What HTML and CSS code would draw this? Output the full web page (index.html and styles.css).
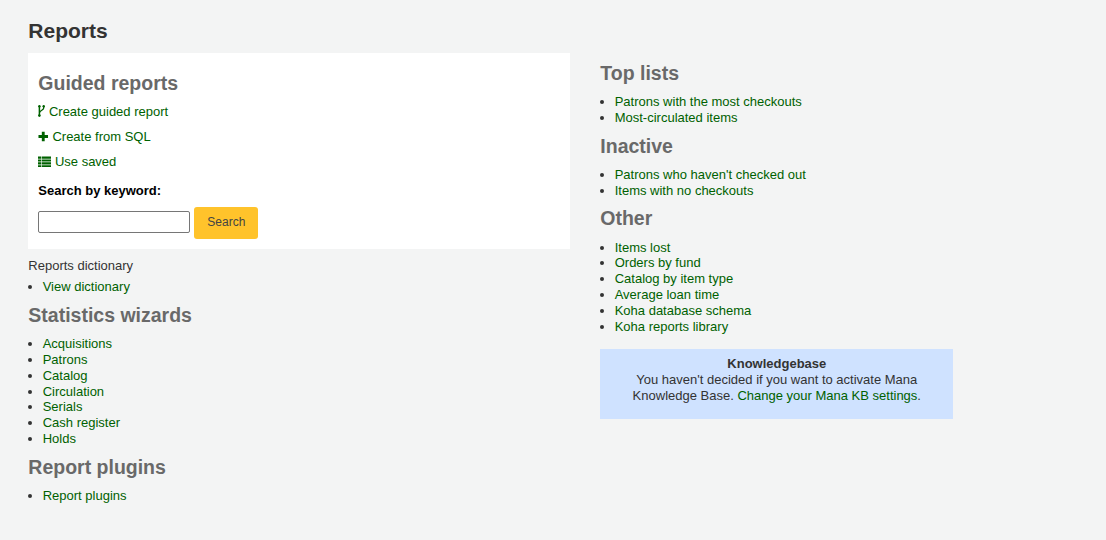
FILE: index.html
```html
<!DOCTYPE html>
<html lang="en">
<head>
<meta charset="utf-8">
<title>Reports</title>
<link rel="stylesheet" href="styles.css">
</head>
<body>
<main class="main">
  <h1 class="title">Reports</h1>
  <div class="columns">
    <div class="col">
      <section class="panel">
        <h2 class="panel-heading">Guided reports</h2>
        <p class="action"><a href="#"><svg class="icon branch" viewBox="0 0 7 12"><path d="M1.4 1V11" fill="none" stroke="currentColor" stroke-width="1.5"/><path d="M5.7 1V3C5.7 5 2.4 5.2 1.5 7.4" fill="none" stroke="currentColor" stroke-width="1.3"/><circle cx="1.4" cy="1.3" r="1.2" fill="currentColor"/><circle cx="5.7" cy="1.3" r="1.2" fill="currentColor"/><circle cx="1.4" cy="10.6" r="1.3" fill="currentColor"/></svg> Create guided report</a></p>
        <p class="action"><a href="#"><svg class="icon plus" viewBox="0 0 11 11"><path d="M4 0.5H7V4H10.5V7H7V10.5H4V7H0.5V4H4Z" fill="currentColor"/></svg> Create from SQL</a></p>
        <p class="action"><a href="#"><svg class="icon list" viewBox="0 0 13 11"><path d="M0 0.5H3V2.7H0ZM3.6 0.5H13V2.7H3.6ZM0 3.4H3V5.6H0ZM3.6 3.4H13V5.6H3.6ZM0 6.3H3V8.5H0ZM3.6 6.3H13V8.5H3.6ZM0 9.2H3V11H0ZM3.6 9.2H13V11H3.6Z" fill="currentColor"/></svg> Use saved</a></p>
        <form class="search">
          <label class="search-label" for="kw">Search by keyword:</label>
          <div class="search-row">
            <input class="search-input" id="kw" type="text">
            <button class="search-btn" type="button">Search</button>
          </div>
        </form>
      </section>
      <p class="dict-label">Reports dictionary</p>
      <ul class="links">
        <li><a href="#">View dictionary</a></li>
      </ul>
      <h2 class="heading">Statistics wizards</h2>
      <ul class="links">
        <li><a href="#">Acquisitions</a></li>
        <li><a href="#">Patrons</a></li>
        <li><a href="#">Catalog</a></li>
        <li><a href="#">Circulation</a></li>
        <li><a href="#">Serials</a></li>
        <li><a href="#">Cash register</a></li>
        <li><a href="#">Holds</a></li>
      </ul>
      <h2 class="heading">Report plugins</h2>
      <ul class="links">
        <li><a href="#">Report plugins</a></li>
      </ul>
    </div>
    <div class="col col-right">
      <h2 class="heading">Top lists</h2>
      <ul class="links">
        <li><a href="#">Patrons with the most checkouts</a></li>
        <li><a href="#">Most-circulated items</a></li>
      </ul>
      <h2 class="heading">Inactive</h2>
      <ul class="links">
        <li><a href="#">Patrons who haven't checked out</a></li>
        <li><a href="#">Items with no checkouts</a></li>
      </ul>
      <h2 class="heading">Other</h2>
      <ul class="links">
        <li><a href="#">Items lost</a></li>
        <li><a href="#">Orders by fund</a></li>
        <li><a href="#">Catalog by item type</a></li>
        <li><a href="#">Average loan time</a></li>
        <li><a href="#">Koha database schema</a></li>
        <li><a href="#">Koha reports library</a></li>
      </ul>
      <div class="kb">
        <strong>Knowledgebase</strong><br>
        You haven't decided if you want to activate Mana Knowledge Base. <a href="#">Change your Mana KB settings</a>.
      </div>
    </div>
  </div>
</main>
</body>
</html>
```
FILE: styles.css
```css
html, body {
  margin: 0;
  padding: 0;
}

body {
  background: #f3f4f4;
  color: #333;
  font-family: "Liberation Sans", Arial, sans-serif;
  font-size: 13px;
  line-height: 15.84px;
  height: 540px;
  overflow: hidden;
}

a {
  color: #006100;
  text-decoration: none;
}

.main {
  padding: 19px 28px 0 28.3px;
}

.title {
  margin: 0 0 10px;
  font-size: 21px;
  line-height: 24px;
  font-weight: bold;
  color: #333;
}

.columns {
  display: flex;
  gap: 30px;
}

.col {
  width: 542px;
  flex: none;
}

.col-right {
  width: 353px;
  padding-top: 9.15px;
}

.panel {
  background: #fff;
  padding: 19px 10px 10px;
  margin-bottom: 9.8px;
}

.panel-heading,
.heading {
  margin: 0;
  font-size: 19.5px;
  line-height: 23.4px;
  font-weight: bold;
  color: #696969;
}

.panel-heading {
  margin-bottom: 9px;
}

.heading {
  margin-bottom: 8.9px;
}

.action {
  margin: 0 0 9.16px;
}

.icon {
  display: inline-block;
  vertical-align: -1px;
}

.branch {
  width: 7px;
  height: 12px;
}

.plus {
  width: 10.5px;
  height: 11px;
}

.list {
  width: 13px;
  height: 11px;
}

.search {
  margin-top: 12.6px;
}

.search-label {
  display: block;
  font-weight: bold;
  color: #000;
  margin-bottom: 8px;
}

.search-row {
  display: flex;
  align-items: flex-start;
  gap: 4px;
}

.search-input {
  box-sizing: border-box;
  width: 152px;
  height: 22px;
  margin: 4px 0 0;
  padding: 1px 2px;
  background: #fff;
  border: 1px solid #767676;
  border-radius: 2px;
}

.search-btn {
  width: 64px;
  height: 32px;
  padding: 0 0 2px;
  background: #ffc32b;
  border: 0;
  border-radius: 3px;
  color: #444;
  font: 12px "Liberation Sans", Arial, sans-serif;
}

.dict-label {
  margin: 0 0 5px;
}

.links {
  margin: 0 0 8.6px;
  padding: 0 0 0 14.4px;
}

.kb {
  box-sizing: border-box;
  height: 70px;
  margin-top: 14.5px;
  padding: 7px 10px;
  background: #cfe2ff;
  text-align: center;
}
```
